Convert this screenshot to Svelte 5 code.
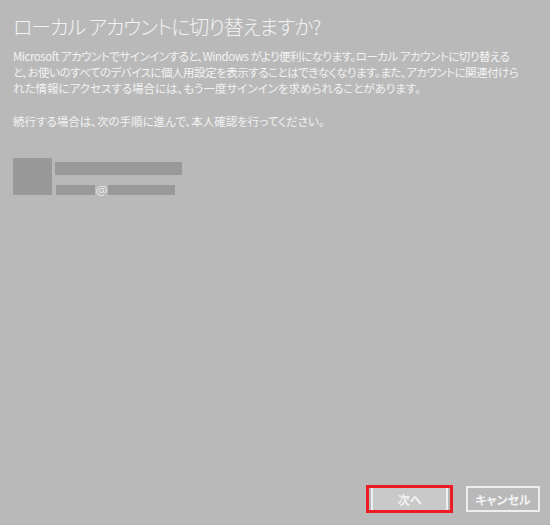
<script>
  const bodyLines = [
    "Microsoft アカウントでサインインすると、Windows がより便利になります。ローカル アカウントに切り替える",
    "と、お使いのすべてのデバイスに個人用設定を表示することはできなくなります。また、アカウントに関連付けら",
    "れた情報にアクセスする場合には、もう一度サインインを求められることがあります。"
  ];
</script>

<div class="page">
  <h1>ローカル アカウントに切り替えますか?</h1>

  <p class="intro">
    {#each bodyLines as line}
      <span>{line}</span>
    {/each}
  </p>
  <p class="next-step">続行する場合は、次の手順に進んで、本人確認を行ってください。</p>

  <div class="account">
    <div class="avatar"></div>
    <div class="details">
      <div class="name"></div>
      <div class="email">
        <div class="mask left"></div>
        <span class="at">@</span>
        <div class="mask right"></div>
      </div>
    </div>
  </div>

  <div class="footer">
    <div class="highlight">
      <button class="primary">次へ</button>
    </div>
    <button class="cancel">キャンセル</button>
  </div>
</div>

<style>
  :global(body) {
    margin: 0;
    background: #b9b9b9;
  }

  .page {
    box-sizing: border-box;
    width: 550px;
    height: 525px;
    padding: 14px 10px 12px 13px;
    display: flex;
    flex-direction: column;
    overflow: hidden;
    background: #b9b9b9;
    color: #f2f2f2;
    font-family: "Noto Sans CJK JP", "Noto Sans", sans-serif;
    font-feature-settings: "palt";
  }

  h1 {
    margin: 0;
    font-size: 20px;
    line-height: 26px;
    font-weight: 300;
    letter-spacing: -1.1px;
    white-space: nowrap;
  }

  .intro {
    margin: 8px 0 0;
    font-size: 11.5px;
    line-height: 16px;
    font-weight: 400;
    letter-spacing: -0.48px;
  }

  .intro span {
    display: block;
    white-space: nowrap;
  }

  .intro span:last-child {
    letter-spacing: 0;
  }

  .next-step {
    margin: 17px 0 0;
    font-size: 11.5px;
    line-height: 16px;
    letter-spacing: 0;
  }

  .account {
    margin-top: 29px;
    display: flex;
    align-items: flex-start;
    gap: 3px;
  }

  .avatar {
    width: 39px;
    height: 37px;
    background: #999;
  }

  .details {
    padding-top: 4px;
  }

  .name {
    width: 127px;
    height: 13px;
    background: #999;
  }

  .email {
    margin: 10px 0 0 1px;
    width: 119px;
    height: 10px;
    display: flex;
    align-items: center;
  }

  .mask {
    height: 10px;
    background: #999;
  }

  .mask.left {
    width: 39px;
  }

  .mask.right {
    flex: 1;
  }

  .at {
    width: 13px;
    text-align: center;
    font-size: 13px;
    font-weight: 300;
    line-height: 10px;
    font-family: "Noto Sans", sans-serif;
  }

  .footer {
    margin-top: auto;
    display: flex;
    align-items: center;
    justify-content: flex-end;
    gap: 13px;
  }

  .highlight {
    box-sizing: border-box;
    width: 87px;
    height: 28px;
    border: 3px solid #ed1c24;
    display: flex;
  }

  button {
    box-sizing: border-box;
    font-family: inherit;
    font-feature-settings: inherit;
    font-size: 12px;
    font-weight: 700;
    color: #f2f2f2;
    padding: 0;
  }

  .primary {
    flex: 1;
    border: none;
    border-left: 2px solid #eee;
    border-right: 2px solid #eee;
    margin: 0 2px;
    background: #c9c9c9;
  }

  .cancel {
    width: 74px;
    height: 26px;
    border: 2px solid #eee;
    background: #b9b9b9;
  }
</style>
